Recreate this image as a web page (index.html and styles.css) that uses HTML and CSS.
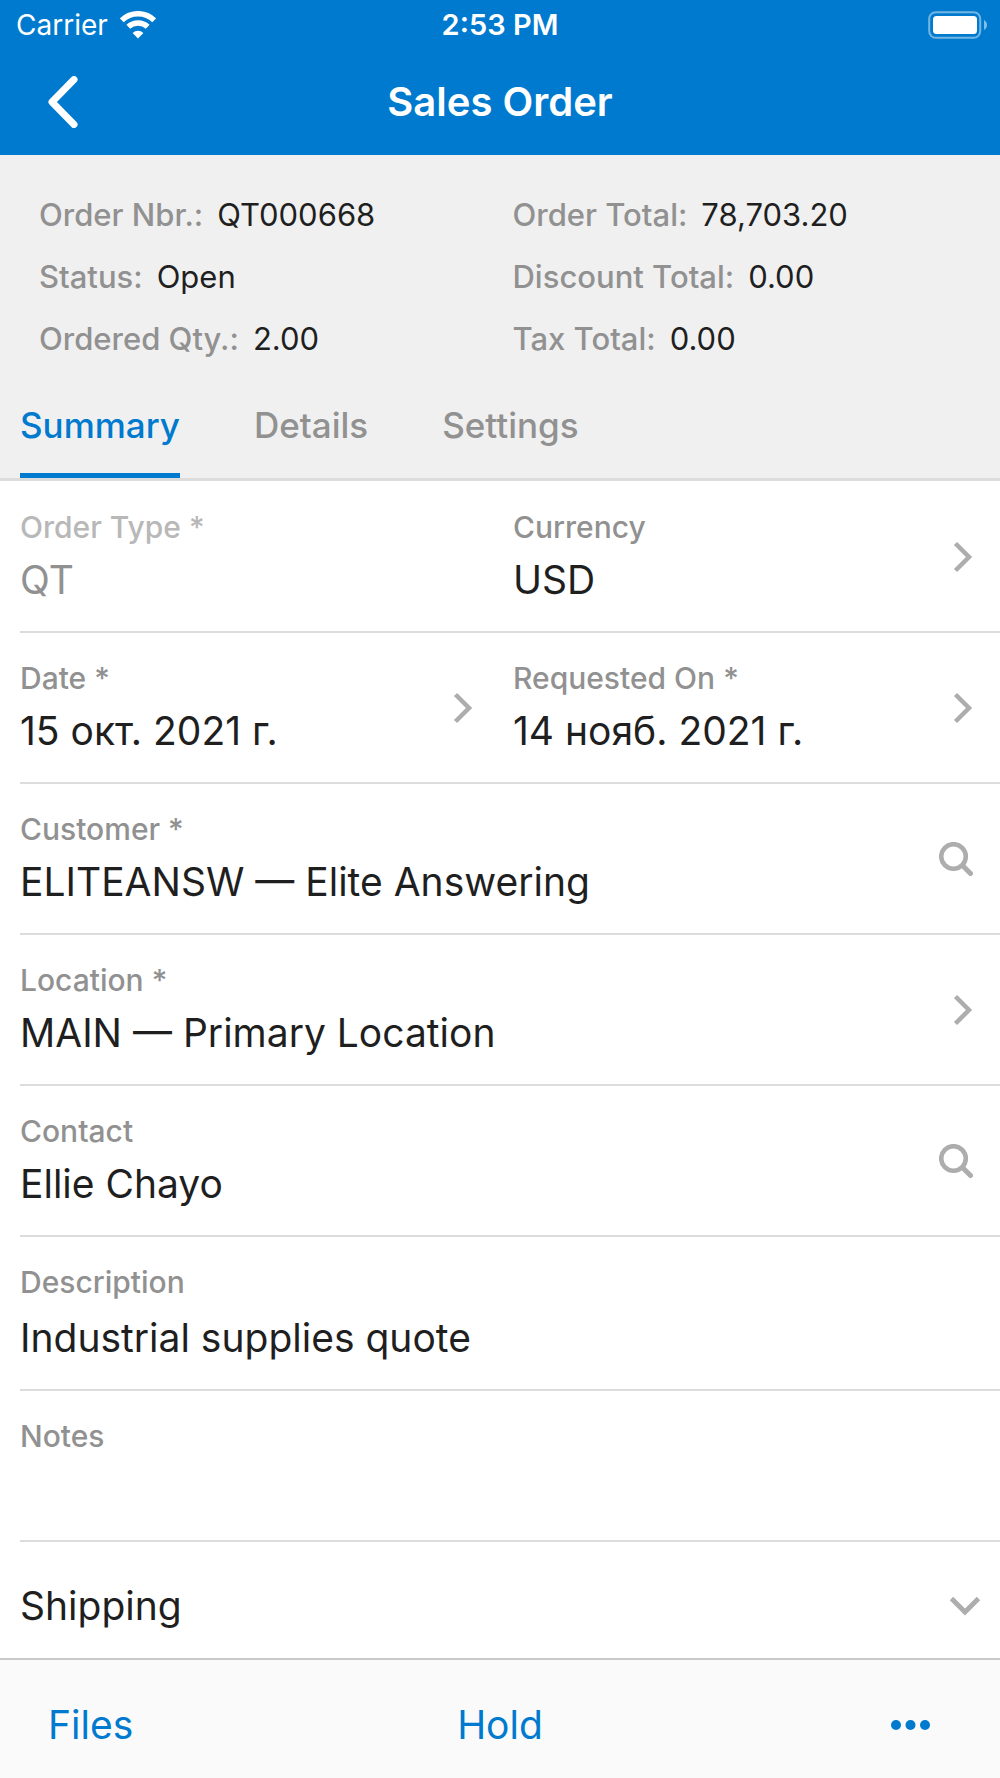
FILE: index.html
```html
<!DOCTYPE html>
<html lang="en">
<head>
<meta charset="utf-8">
<meta name="viewport" content="width=device-width, initial-scale=1">
<title>Sales Order</title>
<link rel="stylesheet" href="styles.css">
</head>
<body>
<svg class="sprite" aria-hidden="true">
  <symbol id="chevron" viewBox="0 0 20 32"><path d="M2.500 2.500 16 16 2.500 29.500" fill="none" stroke="currentColor" stroke-width="4.500"/></symbol>
  <symbol id="chevron-down" viewBox="0 0 32 20"><path d="M2.500 2.500 16 16 29.500 2.500" fill="none" stroke="currentColor" stroke-width="4.800"/></symbol>
  <symbol id="search" viewBox="0 0 34 34"><circle cx="14.500" cy="14.500" r="12.300" fill="none" stroke="currentColor" stroke-width="4.600"/><path d="M23.500 23.500 31.500 31.500" stroke="currentColor" stroke-width="5" stroke-linecap="round"/></symbol>
</svg>

<div class="app">
  <header class="top">
    <div class="status">
      <div class="carrier">
        <span>Carrier</span>
        <svg class="wifi" viewBox="0 0 36 28" aria-hidden="true">
          <path d="M1.800 9.300A23.200 23.200 0 0 1 34.200 9.300" fill="none" stroke="currentColor" stroke-width="5.500"/>
          <path d="M8.300 15.800A14.200 14.200 0 0 1 27.700 15.800" fill="none" stroke="currentColor" stroke-width="5.500"/>
          <path d="M18 27.500 12.600 21.900A8 8 0 0 1 23.400 21.900Z" fill="currentColor"/>
        </svg>
      </div>
      <span class="clock">2:53 PM</span>
      <svg class="battery" viewBox="0 0 60 28" aria-hidden="true">
        <rect x="1.200" y="1.200" width="51" height="25.600" rx="6.500" fill="none" stroke="#fff" stroke-opacity=".45" stroke-width="2"/>
        <rect x="5" y="5" width="44" height="18" rx="3.500" fill="#fff"/>
        <path d="M56 9c4 2 4 8 0 10Z" fill="#fff" fill-opacity=".5"/>
      </svg>
    </div>
    <div class="nav">
      <button class="back" type="button" aria-label="Back">
        <svg viewBox="0 0 30 52" aria-hidden="true"><path d="M26 3.500 4 26 26 48.500" fill="none" stroke="currentColor" stroke-width="7" stroke-linecap="round" stroke-linejoin="round"/></svg>
      </button>
      <h1 class="title">Sales Order</h1>
    </div>
  </header>

  <section class="overview">
    <dl class="facts">
      <div class="fact"><dt>Order Nbr.:</dt><dd>QT000668</dd></div>
      <div class="fact"><dt>Order Total:</dt><dd>78,703.20</dd></div>
      <div class="fact"><dt>Status:</dt><dd>Open</dd></div>
      <div class="fact"><dt>Discount Total:</dt><dd>0.00</dd></div>
      <div class="fact"><dt>Ordered Qty.:</dt><dd>2.00</dd></div>
      <div class="fact"><dt>Tax Total:</dt><dd>0.00</dd></div>
    </dl>
    <nav class="tabs" role="tablist">
      <button class="tab active" type="button" role="tab" aria-selected="true">Summary</button>
      <button class="tab" type="button" role="tab" aria-selected="false">Details</button>
      <button class="tab" type="button" role="tab" aria-selected="false">Settings</button>
    </nav>
  </section>

  <form class="form">
    <div class="row split">
      <div class="field">
        <div class="entry disabled"><label for="type">Order Type *</label><input id="type" type="text" value="QT" disabled></div>
      </div>
      <div class="field">
        <div class="entry"><label for="currency">Currency</label><input id="currency" type="text" value="USD" readonly></div>
        <button class="pick" type="button" aria-label="Choose currency"><svg class="chev"><use href="#chevron"/></svg></button>
      </div>
    </div>
    <div class="row split">
      <div class="field">
        <div class="entry"><label for="date">Date *</label><input id="date" type="text" value="15 окт. 2021 г." readonly></div>
        <button class="pick" type="button" aria-label="Choose date"><svg class="chev"><use href="#chevron"/></svg></button>
      </div>
      <div class="field">
        <div class="entry"><label for="requested">Requested On *</label><input id="requested" type="text" value="14 нояб. 2021 г." readonly></div>
        <button class="pick" type="button" aria-label="Choose requested date"><svg class="chev"><use href="#chevron"/></svg></button>
      </div>
    </div>
    <div class="row">
      <div class="field">
        <div class="entry"><label for="customer">Customer *</label><input id="customer" type="text" value="ELITEANSW — Elite Answering" readonly></div>
        <button class="pick" type="button" aria-label="Find customer"><svg class="lens"><use href="#search"/></svg></button>
      </div>
    </div>
    <div class="row">
      <div class="field">
        <div class="entry"><label for="location">Location *</label><input id="location" type="text" value="MAIN — Primary Location" readonly></div>
        <button class="pick" type="button" aria-label="Choose location"><svg class="chev"><use href="#chevron"/></svg></button>
      </div>
    </div>
    <div class="row">
      <div class="field">
        <div class="entry"><label for="contact">Contact</label><input id="contact" type="text" value="Ellie Chayo" readonly></div>
        <button class="pick" type="button" aria-label="Find contact"><svg class="lens"><use href="#search"/></svg></button>
      </div>
    </div>
    <div class="row">
      <div class="field">
        <div class="entry roomy"><label for="description">Description</label><input id="description" type="text" value="Industrial supplies quote"></div>
      </div>
    </div>
    <div class="row">
      <div class="field">
        <div class="entry"><label for="notes">Notes</label><textarea id="notes" rows="1"></textarea></div>
      </div>
    </div>
    <button class="section" type="button" aria-expanded="false">
      <span>Shipping</span>
      <svg class="chev-down" aria-hidden="true"><use href="#chevron-down"/></svg>
    </button>
  </form>

  <footer class="toolbar">
    <button class="action" type="button">Files</button>
    <button class="action" type="button">Hold</button>
    <button class="action more" type="button" aria-label="More actions">
      <svg viewBox="0 0 40 10" aria-hidden="true"><circle cx="5" cy="5" r="5"/><circle cx="19.500" cy="5" r="5"/><circle cx="34" cy="5" r="5"/></svg>
    </button>
  </footer>
</div>
</body>
</html>
```
FILE: styles.css
```css
:root {
  --blue: #007ace;
  --ink: #1f1f1f;
  --muted: #919191;
  --faint: #b8b8b8;
  --icon: #adadad;
  --line: #dcdcdc;
}

* { box-sizing: border-box; }

body {
  margin: 0;
  background: #fff;
  color: var(--ink);
  font-family: Inter, "Liberation Sans", sans-serif;
  font-size: 39px;
  line-height: 48px;
}

button, input, textarea {
  margin: 0;
  padding: 0;
  border: 0;
  background: none;
  color: inherit;
  font: inherit;
}

svg { display: block; }
.sprite { position: absolute; width: 0; height: 0; }

.app {
  display: flex;
  flex-direction: column;
  min-height: 100vh;
}

/* Header */
.top { background: var(--blue); color: #fff; }

.status {
  display: grid;
  grid-template-columns: 1fr auto 1fr;
  align-items: center;
  height: 50px;
  padding: 0 12px;
  font-size: 28px;
  line-height: 36px;
}
.carrier { display: flex; align-items: center; gap: 12px; padding-left: 4px; }
.wifi { width: 36px; height: 28px; }
.clock { font-size: 29px; font-weight: 600; }
.battery { justify-self: end; width: 60px; height: 28px; }

.nav {
  display: grid;
  grid-template-columns: 1fr auto 1fr;
  align-items: center;
  height: 105px;
  padding: 0 48px 2px;
}
.back { width: 30px; height: 52px; }
.back svg { width: 30px; height: 52px; }
.title { margin: 0; font-size: 40px; font-weight: 600; }

/* Order facts and tabs */
.overview { background: #f0f0f0; border-bottom: 3px solid var(--line); }

.facts {
  display: grid;
  grid-template-columns: 1fr 1fr;
  row-gap: 22px;
  margin: 0;
  padding: 40px 0 0 39px;
  font-size: 31px;
  line-height: 40px;
}
.fact { display: flex; gap: 14px; }
.fact:nth-child(even) { margin-left: -7px; }
.fact dt { color: var(--muted); font-weight: 500; }
.fact dd { margin: 0; }

.tabs { display: flex; gap: 74px; padding: 26px 20px 0; }
.tab {
  height: 93px;
  padding-bottom: 8px;
  border-bottom: 5px solid transparent;
  color: var(--muted);
  font-size: 35px;
  font-weight: 500;
}
.tab.active { border-color: var(--blue); color: var(--blue); }

/* Form rows */
.form { padding: 1px 0 0 20px; }
.row { border-bottom: 2px solid var(--line); }
.field { display: flex; align-items: center; padding: 27px 27px 27px 0; }
.split { display: grid; grid-template-columns: calc(50% - 10px) minmax(0, 1fr); }
.split .field + .field { padding-left: 13px; }
.entry { display: flex; flex: 1; flex-direction: column; gap: 11px; min-width: 0; }
.entry.roomy { gap: 14px; }
.entry label {
  color: var(--muted);
  font-size: 30px;
  font-weight: 500;
  line-height: 36px;
}
.entry input, .entry textarea { width: 100%; height: 48px; outline: 0; resize: none; }
.entry.disabled label { color: var(--faint); }
.entry.disabled input { color: var(--muted); }

.pick { color: var(--icon); }
.chev { width: 20px; height: 32px; }
.lens { width: 34px; height: 34px; }

.section {
  display: flex;
  align-items: center;
  justify-content: space-between;
  width: 100%;
  height: 116px;
  padding: 12px 19px 0 0;
  text-align: left;
}
.chev-down { width: 32px; height: 20px; color: var(--icon); }

/* Bottom toolbar */
.toolbar {
  display: grid;
  flex: 1;
  grid-template-columns: 1fr auto 1fr;
  align-items: center;
  padding: 12px 48px 0;
  border-top: 2px solid #cacaca;
  background: #fafafa;
  color: var(--blue);
}
.action { justify-self: start; }
.more { justify-self: end; padding-right: 21px; }
.more svg { width: 40px; height: 10px; fill: currentColor; }
```
